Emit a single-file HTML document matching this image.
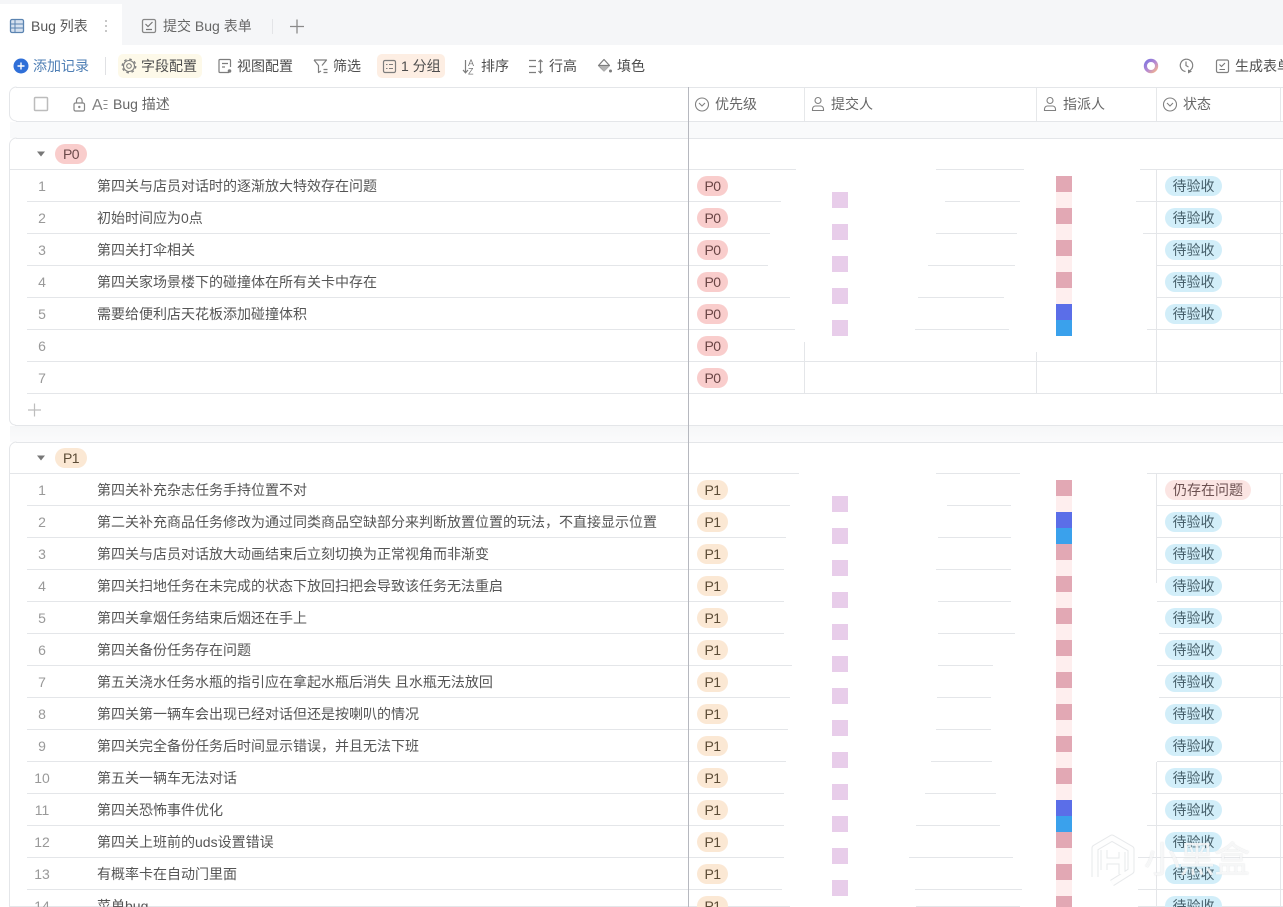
<!DOCTYPE html>
<html lang="zh">
<head>
<meta charset="utf-8">
<title>Bug 列表</title>
<style>
html,body{margin:0;padding:0;background:#fff}
#p{position:relative;width:1283px;height:907px;overflow:hidden;background:#fff;font-family:"Liberation Sans","Noto Sans CJK SC",sans-serif;font-size:14px;color:#4d4d4d;filter:blur(.3px)}
#p div,#p span.a{position:absolute;white-space:nowrap}
.bg{left:10px;width:1273px}
.n{left:27px;width:30px;text-align:center;height:32px;line-height:34px;color:#999}
.t{left:97px;height:32px;line-height:34px;color:#555}
.h{top:87px;height:34px;line-height:34px;color:#666}
.tb{top:54px;height:24px;line-height:24px;color:#4d4d4d}
.pl{left:697px;width:31px;height:20px;line-height:20px;border-radius:10px;text-align:center;color:#6a4545;letter-spacing:-.5px}
.p0{background:#f9cdcc}
.p1{background:#fbe8d4;color:#5c4c36}
.s{left:1165px;width:57px;height:20px;line-height:20px;border-radius:10px;text-align:center;background:#d2eef9;color:#47606b}
.sq{left:832px;width:16px;background:repeating-linear-gradient(#e8cdea 0 16px,#fff 16px 32px)}
.pk{left:1056px;width:16px;background:repeating-linear-gradient(#e2a8b4 0 16px,#feeeee 16px 32px)}
.bl{left:1056px;width:16px;height:16px;background:#5b6ee8}
.cy{left:1056px;width:16px;height:16px;background:#3aa1ec}
.gp{left:55px;width:32px;height:20px;line-height:20px;border-radius:10px;text-align:center;letter-spacing:-.5px}
svg{position:absolute;left:0;top:0}
</style>
</head>
<body>
<div id="p">
<div style="left:0;top:0;width:1283px;height:45px;background:#f5f6f8"></div>
<div style="left:0;top:4px;width:122px;height:41px;background:#fff"></div>
<div class="bg" style="top:122px;height:16px;background:#f9fafb"></div>
<div class="bg" style="top:426px;height:16px;background:linear-gradient(#f6f7f8,#fbfbfc)"></div>
<div style="left:118px;top:54px;width:84px;height:24px;background:#fdf9e9;border-radius:5px"></div>
<div style="left:377px;top:54px;width:68px;height:24px;background:#fdeee3;border-radius:5px"></div>

<svg width="1283" height="907" viewBox="0 0 1283 907" fill="none">
<defs><linearGradient id="g" x1="0" y1="0" x2="1" y2="1"><stop offset="0" stop-color="#7f74e0"/><stop offset=".55" stop-color="#b98bd0"/><stop offset="1" stop-color="#f4b48e"/></linearGradient></defs>
<!-- box borders -->
<path stroke="#e4e6e9" d="M16 87.500H1283M9.500 94a7 7 0 0 1 7-7M9.500 114a7 7 0 0 0 7 7M9.500 94v20M16 121.500H1283M16 138.500H1283M9.500 145a7 7 0 0 1 7-7"/>
<path stroke="#e4e6e9" d="M9.500 145V419a6 6 0 0 0 6 6M15 425.500H1283M9.500 449V907M9.500 449a7 7 0 0 1 7-7M16 442.500H1283"/>
<!-- row lines -->
<path stroke="#e4e6e9" d="M10 169.500H796M936 169.500H1024M1140 169.500H1283
M27 201.500H781M945 201.500H1020M1136 201.500H1283
M27 233.500H770M936 233.500H1017M1143 233.500H1283
M27 265.500H768M928 265.500H1015M1157 265.500H1283
M27 297.500H790M918 297.500H1004M1157 297.500H1283
M27 329.500H795M915 329.500H1009M1147 329.500H1283
M27 361.500H1283M27 393.500H1283
M804.500 342V393M1036.500 352V393M1156.500 169V393M1280.500 169V393
M10 473.500H799M936 473.500H1020M1147 473.500H1283
M27 505.500H790M947 505.500H1011M1157 505.500H1283
M27 537.500H786M938 537.500H1011M1157 537.500H1283
M27 569.500H784M936 569.500H1011M1157 569.500H1283
M27 601.500H784M938 601.500H1011M1157 601.500H1283
M27 633.500H784M938 633.500H1015M1159 633.500H1283
M27 665.500H792M938 665.500H993M1157 665.500H1283
M27 697.500H790M937 697.500H991M1159 697.500H1283
M27 729.500H788M936 729.500H991
M27 761.500H786M931 761.500H992M1157 761.500H1283
M27 793.500H784M925 793.500H996M1152 793.500H1283
M27 825.500H784M916 825.500H1000M1147 825.500H1283
M27 857.500H784M909 857.500H1013M1138 857.500H1283
M27 889.500H782M915 889.500H1022M1138 889.500H1283
M10 906.500H790M916 906.500H1020M1138 906.500H1283
M1156.500 473V583M1156.500 762V907M1280.500 473V907"/>
<!-- header dividers -->
<path stroke="#e6e8ea" d="M804.500 88V121M1036.500 88V121M1156.500 88V121M1280.500 88V121"/>
<path stroke="#b6b8bf" d="M688.500 87V907"/>
<!-- tab icons -->
<rect x="10.500" y="19.500" width="13" height="13" rx="1.500" fill="#d6e1ef" stroke="#5b84b1" stroke-width="1.300"/>
<path stroke="#5b84b1" d="M15 20v12M11 24h12M11 28h12"/>
<g fill="#b5b5b5"><circle cx="106" cy="21" r="1"/><circle cx="106" cy="26" r="1"/><circle cx="106" cy="31" r="1"/></g>
<rect x="142.500" y="19.500" width="13" height="13" rx="1.500" stroke="#888" stroke-width="1.300"/>
<path stroke="#777" stroke-width="1.200" d="M145.500 24l2.500 2.500 4.500-4.500M146 29.500h6"/>
<path stroke="#e3e4e7" d="M272.500 19V34"/>
<path stroke="#8a8a8a" stroke-width="1.300" d="M297 19.500v14M290 26.500h14"/>
<!-- toolbar icons -->
<circle cx="21" cy="66" r="7.500" fill="#2f6fd8"/>
<path stroke="#fff" stroke-width="1.400" d="M21 62.500v7M17.500 66h7"/>
<path stroke="#e0e1e4" d="M105.500 57V75"/>
<circle cx="129" cy="66" r="5.500" stroke="#7d7d7d" stroke-width="1.100"/>
<circle cx="129" cy="66" r="6.800" stroke="#7d7d7d" stroke-width="1.300" stroke-dasharray="2.600 2.740"/>
<circle cx="129" cy="66" r="2.300" stroke="#7d7d7d" stroke-width="1.100"/>
<path stroke="#7d7d7d" stroke-width="1.200" d="M229 72.500h-9a1 1 0 0 1-1-1V60.500a1 1 0 0 1 1-1h9.500a1 1 0 0 1 1 1V67M222 63.500h6M222 67h3"/>
<circle cx="229.500" cy="71" r="1.800" fill="#7d7d7d"/>
<path stroke="#7d7d7d" stroke-width="1.200" stroke-linejoin="round" d="M314 60h12.500l-4.500 5.500M314 60l4.500 5.500v7l2.500-1.500M323.500 69.500h4M323.500 72.500h4"/>
<rect x="383.500" y="60.500" width="12" height="12" rx="1.500" stroke="#7d7d7d" stroke-width="1.200"/>
<path stroke="#7d7d7d" d="M386 64.500h1.500M389 64.500h4M386 68.500h1.500M389 68.500h4"/>
<path stroke="#7d7d7d" stroke-width="1.200" d="M465.500 60v12.500M463 70l2.500 2.800 2.500-2.800"/>
<text x="468" y="66" font-size="9" fill="#777" font-family="Liberation Sans">A</text>
<text x="468" y="74.500" font-size="9" fill="#777" font-family="Liberation Sans">Z</text>
<path stroke="#7d7d7d" stroke-width="1.200" d="M529 60.500h7M529 66.500h7M529 72.500h7M540.500 60v13M538.500 62l2-2 2 2M538.500 71l2 2 2-2"/>
<path stroke="#7d7d7d" stroke-width="1.200" stroke-linejoin="round" d="M604 59.500l5.500 6-5.500 5.500-5.500-5.500zM598.500 65.500h11"/>
<path fill="#b4b4b4" d="M599 66h10.500l-5.500 5.500z"/>
<circle cx="610.500" cy="71" r="1.500" fill="#7d7d7d"/>
<!-- right toolbar -->
<circle cx="1151" cy="66" r="5.600" stroke="url(#g)" stroke-width="3.200"/>
<path stroke="#808080" stroke-width="1.200" d="M1189.500 70.800a6.200 6.200 0 1 0-4 .7M1186 61.500V65.500l2.500 1.500"/>
<path fill="#808080" d="M1188 69.500l4 2-4 2z"/>
<rect x="1216.500" y="60" width="12" height="12.500" rx="1.500" stroke="#808080" stroke-width="1.200"/>
<path stroke="#777" stroke-width="1.100" d="M1219.500 64.500l2 2 3.500-3.500M1219.500 69.500h5.500"/>
<!-- header icons -->
<rect x="34.500" y="97.500" width="13" height="13" rx="1" stroke="#bcbcbc" stroke-width="1.500"/>
<rect x="74" y="103" width="10.500" height="8" rx="1.500" stroke="#858585" stroke-width="1.200"/>
<path stroke="#858585" stroke-width="1.200" d="M76.500 103v-2.500a2.800 2.800 0 0 1 5.600 0V103"/>
<circle cx="79.300" cy="107" r="1.200" fill="#858585"/>
<text x="92" y="110" font-size="16" fill="#808080" font-family="Liberation Sans">A</text>
<path stroke="#8c8c8c" d="M103.500 100.500h4M103.500 104.500h4M103.500 108.500h4"/>
<g stroke="#808080" stroke-width="1.100">
<circle cx="702" cy="104.500" r="6.500"/><path d="M699 103l3 3 3-3"/>
<circle cx="1170" cy="104.500" r="6.500"/><path d="M1167 103l3 3 3-3"/>
<circle cx="818" cy="100.500" r="3"/><path d="M812.500 110.500v-1.500a3 3 0 0 1 3-3h5a3 3 0 0 1 3 3v1.500z"/>
<circle cx="1050" cy="100.500" r="3"/><path d="M1044.500 110.500v-1.500a3 3 0 0 1 3-3h5a3 3 0 0 1 3 3v1.500z"/>
</g>
<path fill="#777" d="M37 151.500h8l-4 5zM37 455.500h8l-4 5z"/>
<path stroke="#bdbdbd" stroke-width="1.200" d="M34.500 403.500v13M28 410h13"/>
</svg>

<!-- tabs -->
<div style="left:31px;top:16px;line-height:20px;color:#555">Bug 列表</div>
<div style="left:163px;top:16px;line-height:20px;color:#666">提交 Bug 表单</div>
<!-- toolbar -->
<div class="tb" style="left:33px;color:#4f7fb5">添加记录</div>
<div class="tb" style="left:141px">字段配置</div>
<div class="tb" style="left:237px">视图配置</div>
<div class="tb" style="left:333px">筛选</div>
<div class="tb" style="left:401px">1 分组</div>
<div class="tb" style="left:481px">排序</div>
<div class="tb" style="left:549px">行高</div>
<div class="tb" style="left:617px">填色</div>
<div class="tb" style="left:1235px">生成表单</div>
<!-- header -->
<div class="h" style="left:113px">Bug 描述</div>
<div class="h" style="left:715px">优先级</div>
<div class="h" style="left:831px">提交人</div>
<div class="h" style="left:1063px">指派人</div>
<div class="h" style="left:1183px">状态</div>

<!-- group P0 -->
<div class="gp p0" style="top:144px;color:#6b4a4a">P0</div>
<div class="n" style="top:169px">1</div><div class="t" style="top:169px">第四关与店员对话时的逐渐放大特效存在问题</div><div class="pl p0" style="top:176px">P0</div><div class="s" style="top:176px">待验收</div>
<div class="n" style="top:201px">2</div><div class="t" style="top:201px">初始时间应为0点</div><div class="pl p0" style="top:208px">P0</div><div class="s" style="top:208px">待验收</div>
<div class="n" style="top:233px">3</div><div class="t" style="top:233px">第四关打伞相关</div><div class="pl p0" style="top:240px">P0</div><div class="s" style="top:240px">待验收</div>
<div class="n" style="top:265px">4</div><div class="t" style="top:265px">第四关家场景楼下的碰撞体在所有关卡中存在</div><div class="pl p0" style="top:272px">P0</div><div class="s" style="top:272px">待验收</div>
<div class="n" style="top:297px">5</div><div class="t" style="top:297px">需要给便利店天花板添加碰撞体积</div><div class="pl p0" style="top:304px">P0</div><div class="s" style="top:304px">待验收</div>
<div class="n" style="top:329px">6</div><div class="pl p0" style="top:336px">P0</div>
<div class="n" style="top:361px">7</div><div class="pl p0" style="top:368px">P0</div>
<div class="sq" style="top:192px;height:144px"></div>
<div class="pk" style="top:176px;height:128px"></div>
<div class="bl" style="top:304px"></div><div class="cy" style="top:320px"></div>

<!-- group P1 -->
<div class="gp p1" style="top:448px">P1</div>
<div class="n" style="top:473px">1</div><div class="t" style="top:473px">第四关补充杂志任务手持位置不对</div><div class="pl p1" style="top:480px">P1</div><div class="s" style="top:480px;width:86px;background:#fbe5e3;color:#6b5050">仍存在问题</div>
<div class="n" style="top:505px">2</div><div class="t" style="top:505px">第二关补充商品任务修改为通过同类商品空缺部分来判断放置位置的玩法，不直接显示位置</div><div class="pl p1" style="top:512px">P1</div><div class="s" style="top:512px">待验收</div>
<div class="n" style="top:537px">3</div><div class="t" style="top:537px">第四关与店员对话放大动画结束后立刻切换为正常视角而非渐变</div><div class="pl p1" style="top:544px">P1</div><div class="s" style="top:544px">待验收</div>
<div class="n" style="top:569px">4</div><div class="t" style="top:569px">第四关扫地任务在未完成的状态下放回扫把会导致该任务无法重启</div><div class="pl p1" style="top:576px">P1</div><div class="s" style="top:576px">待验收</div>
<div class="n" style="top:601px">5</div><div class="t" style="top:601px">第四关拿烟任务结束后烟还在手上</div><div class="pl p1" style="top:608px">P1</div><div class="s" style="top:608px">待验收</div>
<div class="n" style="top:633px">6</div><div class="t" style="top:633px">第四关备份任务存在问题</div><div class="pl p1" style="top:640px">P1</div><div class="s" style="top:640px">待验收</div>
<div class="n" style="top:665px">7</div><div class="t" style="top:665px">第五关浇水任务水瓶的指引应在拿起水瓶后消失 且水瓶无法放回</div><div class="pl p1" style="top:672px">P1</div><div class="s" style="top:672px">待验收</div>
<div class="n" style="top:697px">8</div><div class="t" style="top:697px">第四关第一辆车会出现已经对话但还是按喇叭的情况</div><div class="pl p1" style="top:704px">P1</div><div class="s" style="top:704px">待验收</div>
<div class="n" style="top:729px">9</div><div class="t" style="top:729px">第四关完全备份任务后时间显示错误，并且无法下班</div><div class="pl p1" style="top:736px">P1</div><div class="s" style="top:736px">待验收</div>
<div class="n" style="top:761px">10</div><div class="t" style="top:761px">第五关一辆车无法对话</div><div class="pl p1" style="top:768px">P1</div><div class="s" style="top:768px">待验收</div>
<div class="n" style="top:793px">11</div><div class="t" style="top:793px">第四关恐怖事件优化</div><div class="pl p1" style="top:800px">P1</div><div class="s" style="top:800px">待验收</div>
<div class="n" style="top:825px">12</div><div class="t" style="top:825px">第四关上班前的uds设置错误</div><div class="pl p1" style="top:832px">P1</div><div class="s" style="top:832px">待验收</div>
<div class="n" style="top:857px">13</div><div class="t" style="top:857px">有概率卡在自动门里面</div><div class="pl p1" style="top:864px">P1</div><div class="s" style="top:864px">待验收</div>
<div class="n" style="top:889px">14</div><div class="t" style="top:889px">菜单bug</div><div class="pl p1" style="top:896px">P1</div><div class="s" style="top:896px">待验收</div>
<div class="sq" style="top:496px;height:400px"></div>
<div class="pk" style="top:480px;height:32px"></div>
<div class="bl" style="top:512px"></div><div class="cy" style="top:528px"></div>
<div class="pk" style="top:544px;height:256px"></div>
<div class="bl" style="top:800px"></div><div class="cy" style="top:816px"></div>
<div class="pk" style="top:832px;height:75px"></div>

<!-- watermark -->
<svg width="1283" height="907" viewBox="0 0 1283 907" fill="none">
<path stroke="#d4d7da" stroke-opacity=".55" stroke-width="7" stroke-linejoin="round" d="M1095 877V848l17-10 19 11v22l-19 12M1104 850v20M1122 852v22M1104 861h18"/>
<path stroke="#ffffff" stroke-opacity=".95" stroke-width="5" stroke-linejoin="round" d="M1095 877V848l17-10 19 11v22l-19 12M1104 850v20M1122 852v22M1104 861h18"/>
</svg>
<div style="left:1144px;top:838px;font-size:36px;line-height:44px;letter-spacing:-1px;color:rgba(255,255,255,.8);text-shadow:0 0 1px rgba(170,175,180,.55)">小黑盒</div>
</div>
</body>
</html>
